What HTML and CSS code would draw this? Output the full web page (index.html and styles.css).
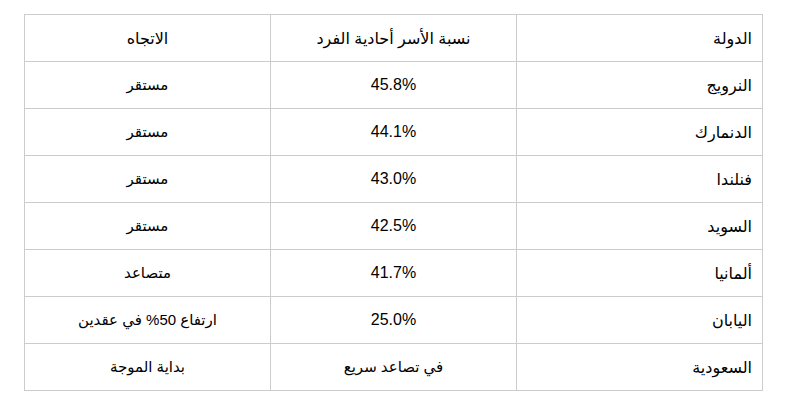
FILE: index.html
```html
<!DOCTYPE html>
<html lang="ar" dir="rtl">
<head>
<meta charset="utf-8">
<link rel="stylesheet" href="styles.css">
</head>
<body>
<table class="data">
  <thead>
    <tr>
      <th class="c-country">الدولة</th>
      <th class="c-mid">نسبة الأسر أحادية الفرد</th>
      <th class="c-mid">الاتجاه</th>
    </tr>
  </thead>
  <tbody>
    <tr><td class="c-country">النرويج</td><td class="c-mid">45.8%</td><td class="c-small">مستقر</td></tr>
    <tr><td class="c-country">الدنمارك</td><td class="c-mid">44.1%</td><td class="c-small">مستقر</td></tr>
    <tr><td class="c-country">فنلندا</td><td class="c-mid">43.0%</td><td class="c-small">مستقر</td></tr>
    <tr><td class="c-country">السويد</td><td class="c-mid">42.5%</td><td class="c-small">مستقر</td></tr>
    <tr><td class="c-country">ألمانيا</td><td class="c-mid">41.7%</td><td class="c-small">متصاعد</td></tr>
    <tr><td class="c-country">اليابان</td><td class="c-mid">25.0%</td><td class="c-small">ارتفاع 50% في عقدين</td></tr>
    <tr><td class="c-country">السعودية</td><td class="c-small">في تصاعد سريع</td><td class="c-small">بداية الموجة</td></tr>
  </tbody>
</table>
</body>
</html>
```
FILE: styles.css
```css
html, body {
  margin: 0;
  padding: 0;
  background: #ffffff;
}
body {
  padding: 14px 37px 0 25px;
  font-family: "Liberation Sans", "DejaVu Sans", sans-serif;
  font-size: 16px;
  color: #000;
}
.data {
  border-collapse: collapse;
  width: 739px;
  table-layout: fixed;
}
.data th, .data td {
  border: 1px solid #cccccc;
  height: 46px;
  padding: 0 10px;
  font-weight: normal;
  vertical-align: middle;
  box-sizing: border-box;
}
.data tr { height: 47px; }
.c-country { text-align: right; }
.c-mid { text-align: center; }
.c-small { text-align: center; font-size: 15px; }
```
